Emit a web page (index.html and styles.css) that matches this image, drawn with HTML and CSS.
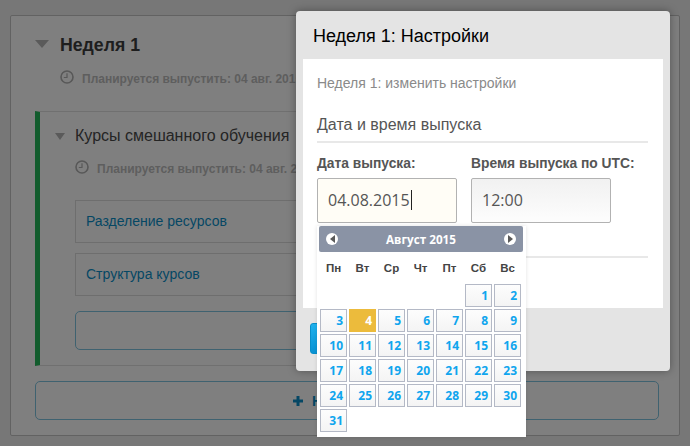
FILE: index.html
```html
<!DOCTYPE html>
<html lang="en">
<head>
    <meta charset="UTF-8">
    <meta name="viewport" content="width=device-width, initial-scale=1.0">
    <title>Неделя 1: Настройки</title>
    <link rel="stylesheet" href="styles.css">
</head>
<body>
    <main class="page">
        <section class="week">
            <div class="week-head">
                <span class="arrow arrow-big"></span>
                <h2>Неделя 1</h2>
            </div>
            <p class="release release-week">
                <svg class="clock" viewBox="0 0 14 14"><circle cx="7" cy="7" r="6"/><path class="hands" d="M7 3.2V7.5H3.8"/></svg>
                Планируется выпустить: 04 авг. 2015 в 12:00 UTC
            </p>

            <div class="chapter">
                <div class="chapter-head">
                    <span class="arrow"></span>
                    <h3>Курсы смешанного обучения</h3>
                </div>
                <p class="release release-chapter">
                    <svg class="clock" viewBox="0 0 14 14"><circle cx="7" cy="7" r="6"/><path class="hands" d="M7 3.2V7.5H3.8"/></svg>
                    Планируется выпустить: 04 авг. 2015 в 12:00 UTC
                </p>
                <a class="unit">Разделение ресурсов</a>
                <a class="unit">Структура курсов</a>
                <div class="new-unit"></div>
            </div>

            <div class="new-chapter">
                <svg class="plus" viewBox="0 0 10 10"><path d="M3.5 0H6.5V3.5H10V6.5H6.5V10H3.5V6.5H0V3.5H3.5Z"/></svg>
                Новый раздел
            </div>
        </section>
    </main>

    <div class="overlay"></div>

    <div class="modal">
        <h1>Неделя 1: Настройки</h1>
        <div class="modal-body">
            <p class="modal-sub">Неделя 1: изменить настройки</p>
            <h4>Дата и время выпуска</h4>
            <div class="fields">
                <div class="field field-date">
                    <label>Дата выпуска:</label>
                    <div class="input input-focus">04.08.2015<span class="caret"></span></div>

                    <div class="calendar">
                        <div class="cal-title">
                            <span class="cal-nav"><i class="tri-left"></i></span>
                            <span>Август 2015</span>
                            <span class="cal-nav"><i class="tri-right"></i></span>
                        </div>
                        <div class="cal-days">
                            <span>Пн</span><span>Вт</span><span>Ср</span><span>Чт</span><span>Пт</span><span>Сб</span><span>Вс</span>
                        </div>
                        <div class="cal-grid" id="cal-grid"></div>
                    </div>
                </div>
                <div class="field">
                    <label>Время выпуска по UTC:</label>
                    <div class="input">12:00</div>
                </div>
            </div>
            <div class="modal-rule"></div>
        </div>
        <div class="modal-foot">
            <button class="save"></button>
        </div>
    </div>

    <script>
        // August 2015 starts on a Saturday
        const grid = document.getElementById('cal-grid');
        for (let i = 0; i < 5; i++) {
            grid.appendChild(document.createElement('span'));
        }
        for (let day = 1; day <= 31; day++) {
            const cell = document.createElement('a');
            cell.innerText = day;
            cell.className = day === 4 ? 'cal-day cal-active' : 'cal-day';
            grid.appendChild(cell);
        }
    </script>
</body>
</html>
```

FILE: styles.css
```css
body {
    margin: 0;
    padding: 0;
    width: 690px;
    height: 446px;
    overflow: hidden;
    position: relative;
    font-family: 'Liberation Sans', Arial, sans-serif;
    background-color: #efefef;
}

.page {
    padding: 15px 10px 0;
}

.week {
    height: 421px;
    box-sizing: border-box;
    padding: 0 20px 0 24px;
    border: 1px solid #c4c4c4;
    border-radius: 2px;
    background-color: #fff;
}

.week-head {
    display: flex;
    align-items: center;
    height: 26px;
    margin-top: 15px;
}

h2 {
    margin: 2px 0 0 11px;
    font-size: 17.7px;
    font-weight: bold;
    color: #3c3c3c;
}

.arrow {
    width: 0;
    height: 0;
    border-left: 5px solid transparent;
    border-right: 5px solid transparent;
    border-top: 7px solid #b5b5b5;
}

.arrow-big {
    border-left-width: 7px;
    border-right-width: 7px;
    border-top-width: 8px;
}

.release {
    display: flex;
    align-items: center;
    gap: 8px;
    margin: 0;
    font-size: 12px;
    font-weight: bold;
    color: #bdbdbd;
    white-space: nowrap;
}

.release-week {
    margin: 15px 0 0 25px;
    height: 14px;
}

.release-chapter {
    margin: 15px 0 0 35px;
    height: 14px;
}

.clock {
    width: 14px;
    height: 14px;
    margin-top: -4px;
    flex: none;
    fill: none;
    stroke: #b0b0b0;
    stroke-width: 1.6;
}

.hands {
    stroke-width: 1.2;
}

.chapter {
    box-sizing: border-box;
    height: 255px;
    margin-top: 25px;
    padding: 13px 0 0 0;
    border-left: 5px solid #25b85a;
    border-top: 1px solid #e0e0e0;
    border-bottom: 1px solid #e0e0e0;
}

.chapter-head {
    display: flex;
    align-items: center;
    height: 22px;
    margin-left: 15px;
}

h3 {
    margin: 0 0 0 10px;
    font-size: 16px;
    font-weight: normal;
    color: #4a4a4a;
}

.unit {
    display: block;
    box-sizing: border-box;
    height: 43px;
    margin: 0 0 10px 35px;
    padding: 12px 10px;
    border: 1px solid #ddd;
    font-size: 14px;
    color: #0a8fc9;
}

.release-chapter + .unit {
    margin-top: 24px;
}

.new-unit {
    box-sizing: border-box;
    height: 39px;
    margin: 15px 0 0 35px;
    border: 1px solid #7fc4e0;
    border-radius: 5px;
}

.new-chapter {
    box-sizing: border-box;
    height: 39px;
    margin-top: 15px;
    padding: 11px 0 0 12px;
    border: 1px solid #7fc4e0;
    border-radius: 5px;
    text-align: center;
    font-size: 14px;
    font-weight: bold;
    color: #0a8fc9;
}

.plus {
    width: 10px;
    height: 10px;
    margin-right: 5px;
    fill: #0a8fc9;
}

/* everything from here lies over the page */
.overlay {
    position: absolute;
    top: 0;
    left: 0;
    right: 0;
    bottom: 0;
    background-color: rgba(0, 0, 0, 0.5);
}

.modal {
    position: absolute;
    top: 11px;
    left: 296px;
    width: 374px;
    height: 360px;
    box-sizing: border-box;
    padding: 0 7px;
    border-radius: 4px;
    background-color: #e4e4e4;
    box-shadow: 0 0 8px rgba(0, 0, 0, 0.35);
}

h1 {
    margin: 0;
    padding: 15px 0 0 10px;
    height: 33px;
    font-size: 18px;
    line-height: 21px;
    font-weight: normal;
    color: #000;
}

.modal-body {
    box-sizing: border-box;
    height: 249px;
    padding: 16px 15px 0 14px;
    background-color: #fff;
}

.modal-sub {
    margin: 0;
    font-size: 14px;
    line-height: 17px;
    color: #8a8a8a;
}

h4 {
    margin: 22px 0 0;
    padding-bottom: 6px;
    font-size: 16px;
    line-height: 21px;
    font-weight: normal;
    color: #555;
    border-bottom: 2px solid #e8e8e8;
}

.fields {
    display: flex;
    gap: 14px;
    margin-top: 12px;
}

.field {
    position: relative;
    width: 140px;
    flex: none;
}

label {
    display: block;
    font-size: 13.8px;
    line-height: 17px;
    font-weight: bold;
    color: #555;
    white-space: nowrap;
}

.input {
    box-sizing: border-box;
    height: 45px;
    margin-top: 6px;
    padding-left: 10px;
    border: 1px solid #b2b2b2;
    border-radius: 2px;
    font-family: 'Open Sans', sans-serif;
    font-size: 16px;
    line-height: 43px;
    color: #555;
    background: linear-gradient(#f1f1f1, #fdfdfd);
}

.input-focus {
    background: #fffdf6;
}

.caret {
    display: inline-block;
    width: 1px;
    height: 20px;
    margin-left: 1px;
    vertical-align: -4px;
    background-color: #222;
}

.modal-rule {
    height: 2px;
    margin-top: 33px;
    background-color: #e8e8e8;
}

.modal-foot {
    padding: 15px 0 0 7px;
}

.save {
    display: block;
    width: 90px;
    height: 31px;
    border: 1px solid #0a8fc9;
    border-radius: 3px;
    background: linear-gradient(#1fb2ee, #0a93d4);
}

.calendar {
    position: absolute;
    top: 71px;
    left: 0;
    width: 209px;
    height: 211px;
    box-sizing: border-box;
    padding: 0 3px 0 2px;
    background-color: #fff;
    box-shadow: 0 0 4px rgba(0, 0, 0, 0.12);
    font-family: 'Open Sans', sans-serif;
}

.cal-title {
    display: flex;
    justify-content: space-between;
    align-items: center;
    box-sizing: border-box;
    height: 26px;
    padding: 0 7px;
    border-radius: 2px;
    background-color: #8a93a5;
    font-size: 11.7px;
    font-weight: bold;
    color: #fff;
}

.cal-nav {
    display: flex;
    align-items: center;
    justify-content: center;
    width: 12px;
    height: 12px;
    border-radius: 50%;
    background-color: #fff;
}

.tri-left, .tri-right {
    width: 0;
    height: 0;
    border-top: 4px solid transparent;
    border-bottom: 4px solid transparent;
}

.tri-left {
    border-right: 5px solid #5a5a5a;
}

.tri-right {
    border-left: 5px solid #5a5a5a;
}

.cal-days {
    display: grid;
    grid-template-columns: repeat(7, 27px);
    column-gap: 2px;
    padding-left: 1px;
    height: 32px;
    font-family: 'Liberation Sans', sans-serif;
    font-size: 11.5px;
    font-weight: bold;
    line-height: 32px;
    text-align: center;
    color: #444;
}

.cal-grid {
    display: grid;
    grid-template-columns: repeat(7, 27px);
    grid-auto-rows: 23px;
    gap: 2px;
    padding-left: 1px;
}

.cal-day {
    box-sizing: border-box;
    padding-right: 3px;
    border: 1px solid #b4b9c6;
    text-align: right;
    font-size: 12px;
    font-weight: bold;
    line-height: 21px;
    color: #0fa5ee;
    background: linear-gradient(#fdfdfd, #f4f4f4);
}

.cal-active {
    border-color: #ecbb3c;
    color: #fff;
    background: #ecbb3c;
}
```
